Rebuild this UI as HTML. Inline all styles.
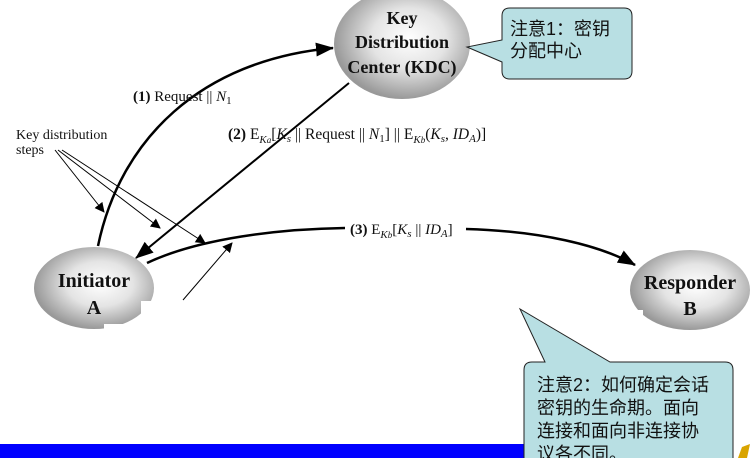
<!DOCTYPE html>
<html><head><meta charset="utf-8"><style>
body{margin:0;width:754px;height:458px;overflow:hidden;background:#fff;position:relative;font-family:"Liberation Serif",serif}
svg{position:absolute;left:0;top:0}
.cn{font-family:"Liberation Sans","Noto Sans CJK SC",sans-serif}
</style></head><body>
<svg width="754" height="458" viewBox="0 0 754 458">
<defs>
<radialGradient id="g" cx="55%" cy="45%" r="55%"><stop offset="0" stop-color="#ffffff"/><stop offset="0.5" stop-color="#e4e4e4"/><stop offset="1" stop-color="#999"/></radialGradient>
<marker id="a" markerWidth="10" markerHeight="10" refX="9" refY="5" orient="auto" markerUnits="userSpaceOnUse"><path d="M0,0 L10,5 L0,10 z" fill="#000"/></marker>
<marker id="b" markerWidth="18" markerHeight="14" refX="17" refY="7" orient="auto" markerUnits="userSpaceOnUse"><path d="M0,0 L18,7 L0,14 z" fill="#000"/></marker>
</defs>
<rect x="0" y="444" width="524" height="14" fill="#0000ff"/>
<path d="M738,458 L742,447 L750,444 L747,458z" fill="#d9a400"/>
<ellipse cx="402" cy="44" rx="68" ry="55" fill="url(#g)"/>
<ellipse cx="94" cy="288" rx="60" ry="41" fill="url(#g)"/>
<rect x="141" y="301" width="60" height="40" fill="#fff"/>
<rect x="104" y="324" width="40" height="10" fill="#fff"/>
<ellipse cx="690" cy="290" rx="60" ry="40" fill="url(#g)"/>
<rect x="625" y="310" width="18" height="25" fill="#fff"/>
<g font-weight="bold" font-size="18" text-anchor="middle" fill="#111">
<text x="402" y="24">Key</text><text x="402" y="48">Distribution</text><text x="402" y="73">Center (KDC)</text>
<text x="94" y="287" font-size="20">Initiator</text><text x="94" y="314" font-size="20">A</text>
<text x="690" y="289" font-size="20">Responder</text><text x="690" y="315" font-size="20">B</text>
</g>
<g fill="none" stroke="#000">
<path d="M98,246 C120,140 200,60 333,48" stroke-width="2.5" marker-end="url(#b)"/>
<path d="M349,83 L136,258" stroke-width="2" marker-end="url(#b)"/>
<path d="M147,263 C200,238 280,229 345,228" stroke-width="2.5"/>
<path d="M466,229 C540,231 600,245 635,265" stroke-width="2.5" marker-end="url(#b)"/>
<path d="M55,150 L104,212" stroke-width="1" marker-end="url(#a)"/>
<path d="M58,150 L160,228" stroke-width="1" marker-end="url(#a)"/>
<path d="M62,150 L205,243" stroke-width="1" marker-end="url(#a)"/>
<path d="M183,300 L232,243" stroke-width="1" marker-end="url(#a)"/>
</g>
<g font-size="14" fill="#111">
<text x="133" y="101" font-size="15"><tspan font-weight="bold">(1)</tspan> Request || <tspan font-style="italic">N</tspan><tspan font-size="11" dy="3">1</tspan></text>
<text x="228" y="139" font-size="15.5"><tspan font-weight="bold">(2)</tspan> E<tspan font-size="11" dy="4" font-style="italic">K<tspan font-size="9">a</tspan></tspan><tspan dy="-4">[</tspan><tspan font-style="italic">K<tspan font-size="11" dy="3">s</tspan></tspan><tspan dy="-3"> || Request || </tspan><tspan font-style="italic">N</tspan><tspan font-size="11" dy="3">1</tspan><tspan dy="-3">] || E</tspan><tspan font-size="11" dy="4" font-style="italic">K<tspan font-size="9">b</tspan></tspan><tspan dy="-4">(</tspan><tspan font-style="italic">K<tspan font-size="11" dy="3">s</tspan></tspan><tspan dy="-3">, </tspan><tspan font-style="italic">ID<tspan font-size="11" dy="3">A</tspan></tspan><tspan dy="-3">)]</tspan></text>
<text x="350" y="234" font-size="15"><tspan font-weight="bold">(3)</tspan> E<tspan font-size="11" dy="4" font-style="italic">K<tspan font-size="9">b</tspan></tspan><tspan dy="-4">[</tspan><tspan font-style="italic">K<tspan font-size="11" dy="3">s</tspan></tspan><tspan dy="-3"> || </tspan><tspan font-style="italic">ID<tspan font-size="11" dy="3">A</tspan></tspan><tspan dy="-3">]</tspan></text>
<text x="16" y="139">Key distribution</text>
<text x="16" y="154">steps</text>
</g>
<path d="M510,8 H624 Q632,8 632,16 V71 Q632,79 624,79 H510 Q502,79 502,71 V62 L467,47 L502,40 V16 Q502,8 510,8z" fill="#b8dfe3" stroke="#222" stroke-width="1"/>
<path d="M532,362 H545 L520,309 L610,362 H725 Q733,362 733,370 V470 H524 V370 Q524,362 532,362z" fill="#b8dfe3" stroke="#222" stroke-width="1"/>
<g class="cn" font-size="18" fill="#111">
<text x="510" y="35">注意1：密钥</text>
<text x="510" y="57">分配中心</text>
<text x="537" y="391">注意2：如何确定会话</text>
<text x="537" y="414">密钥的生命期。面向</text>
<text x="537" y="437">连接和面向非连接协</text>
<text x="537" y="460">议各不同。</text>
</g>
</svg>
</body></html>
